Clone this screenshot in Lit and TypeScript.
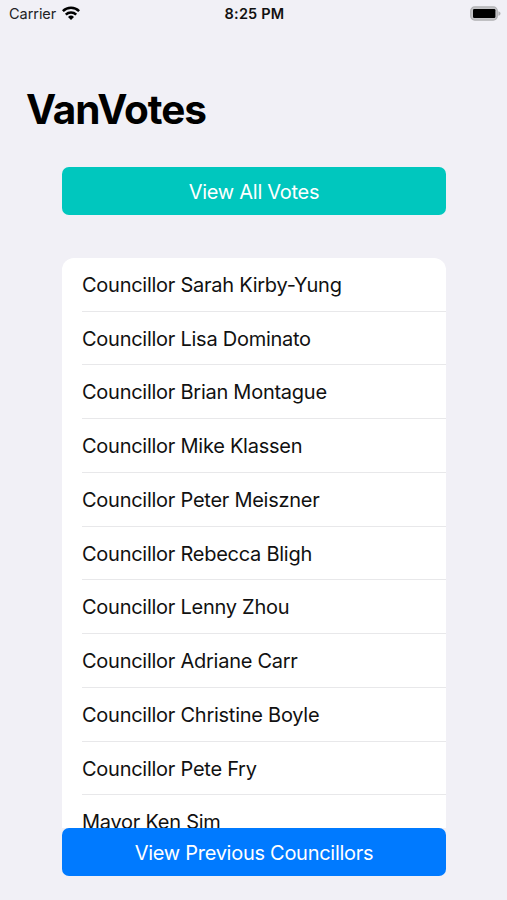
import { LitElement, html, css } from "lit";
import { customElement } from "lit/decorators.js";

const MEMBERS = [
  "Councillor Sarah Kirby-Yung",
  "Councillor Lisa Dominato",
  "Councillor Brian Montague",
  "Councillor Mike Klassen",
  "Councillor Peter Meiszner",
  "Councillor Rebecca Bligh",
  "Councillor Lenny Zhou",
  "Councillor Adriane Carr",
  "Councillor Christine Boyle",
  "Councillor Pete Fry",
  "Mayor Ken Sim",
];

@customElement("status-bar")
class StatusBar extends LitElement {
  static styles = css`
    :host {
      display: grid;
      grid-template-columns: 1fr auto 1fr;
      align-items: center;
      height: 26px;
      padding: 0 6px 0 8px;
      box-sizing: border-box;
      font-size: 14.5px;
      color: #222224;
    }
    .left {
      display: flex;
      align-items: center;
      gap: 6px;
      padding-left: 1px;
      letter-spacing: -0.05px;
    }
    .time {
      font-weight: 600;
      letter-spacing: 0.2px;
      color: #111;
    }
    .battery {
      justify-self: end;
    }
    svg {
      display: block;
    }
    .wifi {
      margin-top: -1px;
    }
  `;
  render() {
    return html`
      <div class="left">
        <span>Carrier</span>
        <svg class="wifi" width="18" height="14" viewBox="0 0 18 14">
          <g fill="none" stroke="#000" stroke-width="2.5">
            <path d="M0.9 5.1A11.4 11.4 0 0 1 17.1 5.1" />
            <path d="M3.8 8.7A7.4 7.4 0 0 1 14.2 8.7" />
          </g>
          <path d="M9 14L6 11A4.3 4.3 0 0 1 12 11Z" />
        </svg>
      </div>
      <span class="time">8:25 PM</span>
      <svg class="battery" width="31" height="15" viewBox="0 0 31 15">
        <rect x="0.7" y="0.9" width="26.6" height="13.2" rx="4" fill="#c4c4c7" stroke="#b0b0b3" stroke-width="1.2" />
        <rect x="3" y="3" width="22.4" height="9" rx="1.2" />
        <path d="M28.4 5.2C31.2 6 31.2 9 28.4 9.8Z" fill="#b0b0b3" />
      </svg>
    `;
  }
}

@customElement("app-root")
class AppRoot extends LitElement {
  static styles = css`
    :host {
      display: flex;
      flex-direction: column;
      height: 900px;
      overflow: hidden;
      box-sizing: border-box;
      padding-bottom: 24.5px;
      background: #f1f0f6;
      font-family: Inter, "Liberation Sans", sans-serif;
      color: #111;
    }
    h1 {
      margin: 58px 0 0 26px;
      height: 52px;
      line-height: 52px;
      font-size: 40.5px;
      font-weight: 700;
      letter-spacing: -1.05px;
      color: #000;
    }
    main {
      flex: 1;
      min-height: 0;
      display: flex;
      flex-direction: column;
      margin: 31px 61px 0 62px;
    }
    button {
      flex: none;
      height: 47.5px;
      padding: 2px 0 0;
      border: 0;
      border-radius: 7px;
      font: inherit;
      font-size: 20px;
      letter-spacing: -0.28px;
      color: #fff;
    }
    .all {
      background: #00c7be;
      margin-bottom: 43px;
    }
    .previous {
      background: #007aff;
    }
    ul {
      flex: 1;
      min-height: 0;
      overflow: hidden;
      margin: 0;
      padding: 0;
      list-style: none;
      background: #fff;
      border-radius: 12px 12px 0 0;
    }
    li {
      height: 53.75px;
      box-sizing: border-box;
      margin-left: 20px;
      line-height: 55.5px;
      font-size: 20px;
      letter-spacing: -0.26px;
      white-space: nowrap;
      border-bottom: 1px solid #e8e8ea;
    }
    li:first-child {
      height: 54.1px;
    }
  `;
  render() {
    return html`
      <status-bar></status-bar>
      <h1>VanVotes</h1>
      <main>
        <button class="all">View All Votes</button>
        <ul>
          ${MEMBERS.map((name) => html`<li>${name}</li>`)}
        </ul>
        <button class="previous">View Previous Councillors</button>
      </main>
    `;
  }
}
